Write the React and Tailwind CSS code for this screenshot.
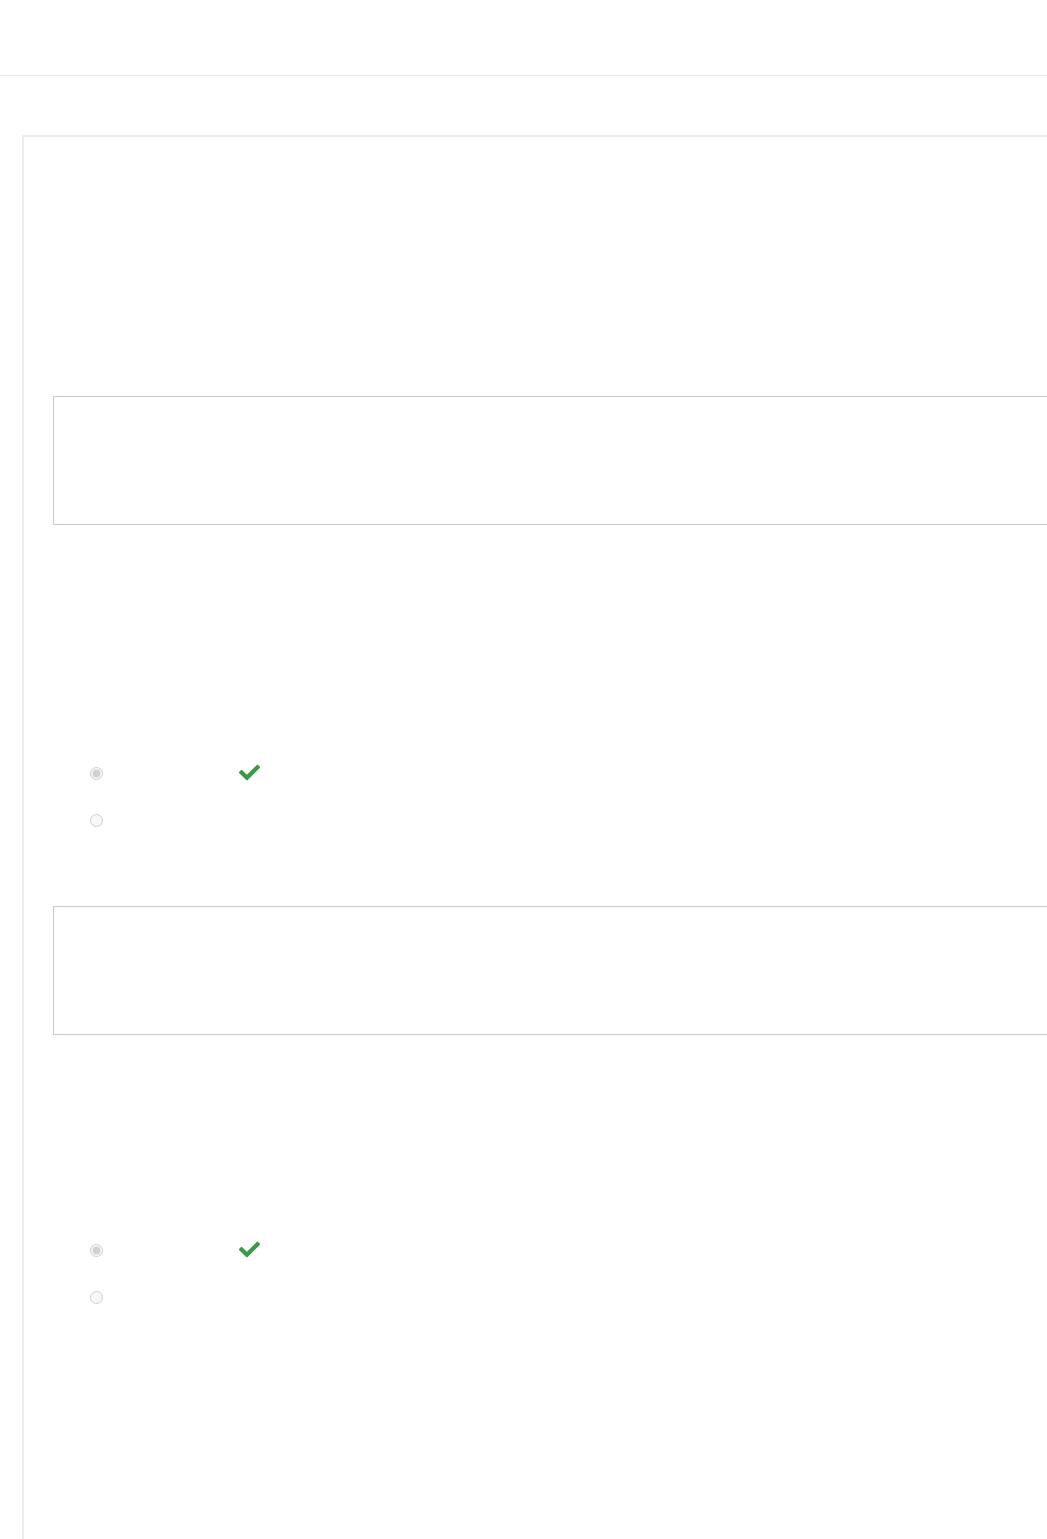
import React from "react";
import { FaCheck } from "react-icons/fa";

function Question({ gapTop, first, second, check }) {
  return (
    <div>
      <div className="h-[129px] border border-r-0 border-[#c6cad6] bg-white" />
      <div className={`${gapTop} ml-[37px] flex flex-col gap-[34px]`}>
        <div className="flex items-center h-[13px]">
          <input type="radio" disabled defaultChecked={first} className="m-0 w-[13px] h-[13px]" />
          <span className="ml-[136px] -mt-[2px] flex">
            {check && <FaCheck className="text-[#3b9a47]" size={21} />}
          </span>
        </div>
        <div className="flex items-center h-[13px]">
          <input type="radio" disabled defaultChecked={second} className="m-0 w-[13px] h-[13px]" />
        </div>
      </div>
    </div>
  );
}

export default function App() {
  return (
    <div className="w-[1047px] h-[1539px] overflow-hidden bg-white" style={{ fontFamily: "'Liberation Sans', Arial, sans-serif" }}>
      <header className="h-[76px] border-b border-[#e6e6e6]" />
      <main className="ml-[22px] mt-[59px] w-[1100px] h-[1500px] border-2 border-b-0 border-[#ebebeb] pl-[29px] pt-[259px]">
        <Question gapTop="mt-[242px]" first check />
        <div className="mt-[79px]">
          <Question gapTop="mt-[209px]" first check />
        </div>
      </main>
    </div>
  );
}
